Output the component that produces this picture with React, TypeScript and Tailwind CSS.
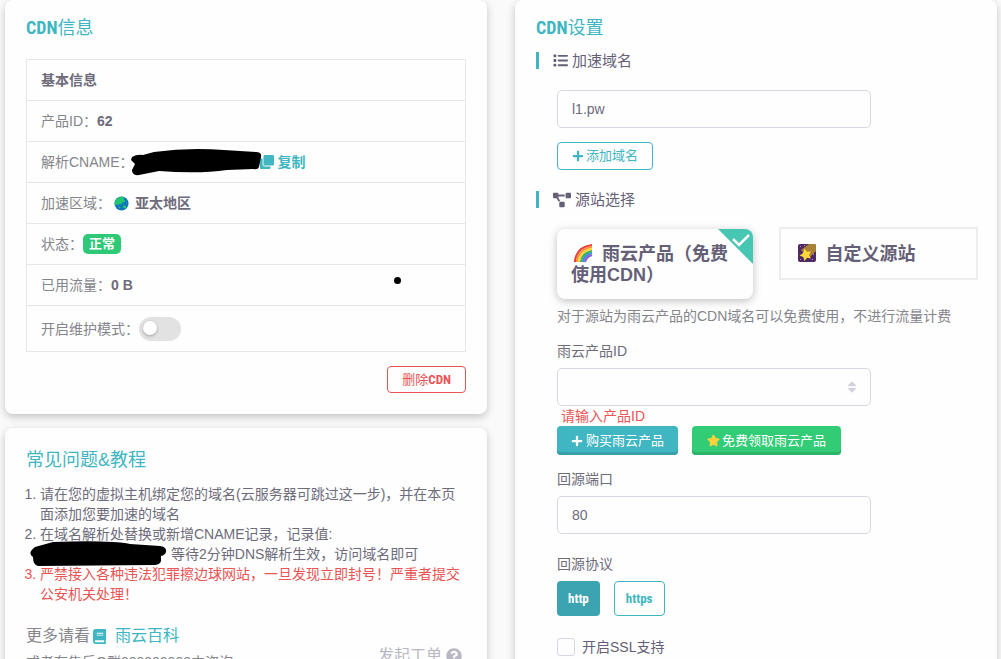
import type { ReactNode } from "react";
import { FaBook, FaClone, FaPlus, FaProjectDiagram, FaQuestionCircle, FaSort, FaStar } from "react-icons/fa";
import { FaList } from "react-icons/fa6";

const Globe = () => (
  <svg viewBox="0 0 16 16" className="size-[15px]" aria-hidden="true">
    <circle cx="8" cy="8" r="7.5" fill="#1277bd" />
    <path d="M2 4Q5 .2 9 .8L11 2 10 3.5 12 5 11 7 9 6.5 8 9 6.5 8 5 9.5 3 8.5 2 10 .7 8.5Q.5 6 2 4Z" fill="#20c86a" />
    <path d="M9.5 10.5 12 10 13.5 11.5 12 13.5 10 12.5ZM5 11 7 12 6 13.5Z" fill="#20c86a" />
  </svg>
);

const Rainbow = () => (
  <svg viewBox="0 0 20 20" className="ml-0.5 mr-1 inline size-5 align-[-3px]" fill="none" strokeWidth="2.2" aria-hidden="true">
    <path d="M2 19Q3 4 19 2" stroke="#e8403a" />
    <path d="M4 19Q5 6 19 4" stroke="#f8923a" />
    <path d="M6 19Q7 8 19 6" stroke="#fbd43c" />
    <path d="M8 19Q9 10 19 8" stroke="#3db54a" />
    <path d="M10 19Q11 12 19 10" stroke="#3a8ee0" />
    <path d="M12 19Q13 14 19 12" stroke="#8b5fd0" />
  </svg>
);

const Comet = () => (
  <svg viewBox="0 0 20 20" className="ml-0.5 mr-1 inline size-5 align-[-3px]" aria-hidden="true">
    <rect x="1" y="1" width="18" height="18" rx="2" fill="#4e2a63" />
    <path d="M4 7 12 1H17Q19 1 19 3V8L12 15Z" fill="#a98236" />
    <path d="M7.5 5.5 10 8.8 14 8.5 12 12 14 15.5 10 14.8 7.5 18 6.3 14 2.5 12.5 6 10.3Z" fill="#ffd83b" />
    <path d="M3 3H4V4H3ZM7 2H8V3H7ZM16 11H17V12H16ZM15 16H16V17H15ZM3 16H4V17H3Z" fill="#b48fd0" />
  </svg>
);

const Condensed = ({ children }: { children: ReactNode }) => (
  <span className="font-['Roboto_Condensed','Open_Sans_Condensed','Noto_Sans_Condensed','Liberation_Sans',sans-serif] leading-none font-bold">
    {children}
  </span>
);

const Card = ({ children, className }: { children: ReactNode; className: string }) => (
  <section className={`rounded-lg bg-[#fdfefd] shadow-[0_3px_8px_rgba(0,0,0,0.22)] ${className}`}>{children}</section>
);

const Title = ({ children }: { children: ReactNode }) => (
  <h2 className="text-lg leading-[22px] text-[#3fb6c1]">{children}</h2>
);

const SectionHead = ({ icon, children }: { icon: ReactNode; children: ReactNode }) => (
  <h3 className="flex h-[17px] items-center gap-1 border-l-[3px] border-[#3fb6c1] pl-3.5 text-[15px] text-[#655f77]">
    {icon}
    {children}
  </h3>
);

const Row = ({ label, children }: { label: string; children?: ReactNode }) => (
  <tr className="border border-[#e6e6ed]">
    <td className="h-[41px] px-3.5">
      <div className="relative flex items-center text-[#85858c]">
        {label}
        {children}
      </div>
    </td>
  </tr>
);

const inputStyle = "block h-[38px] w-full rounded-[5px] border border-[#d8d6e0] bg-transparent px-3.5 text-[#6e6b7b]";

const App = () => {
  return (
    <main className="grid h-screen grid-cols-2 items-start gap-7 overflow-hidden bg-[#fafafa] pl-[5px] pr-1 font-['Liberation_Sans','Noto_Sans_CJK_SC',sans-serif] text-sm leading-5 text-[#6e6b7b]">
      <div className="flex flex-col gap-3.5">
        <Card className="px-[21px] pt-[17px] pb-[21px]">
          <Title>
            <Condensed>CDN</Condensed>信息
          </Title>
          <table className="mt-5 w-full border-collapse">
            <thead>
              <tr className="border border-[#e6e6ed]">
                <th className="h-[41px] px-3.5 text-left">基本信息</th>
              </tr>
            </thead>
            <tbody>
              <Row label="产品ID：">
                <b className="text-[#6e6b7b]">62</b>
              </Row>
              <Row label="解析CNAME：">
                <svg viewBox="0 0 134 28" className="absolute left-[88px] h-7 w-[134px]" aria-hidden="true">
                  <path d="M3 9Q8 6 14 7L25 4Q60-1 95 2L127 4Q133 4 132 9L130 19Q129 22 124 21L98 22Q70 26 30 23L10 27Q3 28 3 22L6 16 2 12Z" fill="#000" />
                </svg>
                <button className="ml-[126px] flex items-center gap-1 font-bold text-[#3fb6c1]">
                  <FaClone className="size-3.5" />
                  复制
                </button>
              </Row>
              <Row label="加速区域：">
                <span className="ml-[3px]"><Globe /></span>
                <b className="ml-1.5 text-[#6e6b7b]">亚太地区</b>
              </Row>
              <Row label="状态：">
                <span className="rounded-[5px] bg-[#2dc976] px-1.5 text-[13px] font-bold text-white">正常</span>
              </Row>
              <Row label="已用流量：">
                <b className="text-[#6e6b7b]">0 B</b>
                <span className="absolute right-[50px] top-0.5 size-[7px] rounded-full bg-black" />
              </Row>
              <tr className="border border-[#e6e6ed]">
                <td className="h-[46px] px-3.5 text-[#85858c]">
                  <label className="flex items-center">
                    开启维护模式：
                    <input
                      type="checkbox"
                      className="h-6 w-[42px] appearance-none rounded-full bg-[#e2e2e2] p-1 before:block before:size-3.5 before:rounded-full before:bg-white before:shadow-[0_1px_3px_rgba(0,0,0,0.3)] checked:bg-[#3fb6c1]"
                    />
                  </label>
                </td>
              </tr>
            </tbody>
          </table>
          <div className="mt-3.5 flex justify-end">
            <button className="h-[27px] rounded border border-[#ea5455] px-3.5 text-[13px] text-[#ea5455]">
              删除<Condensed>CDN</Condensed>
            </button>
          </div>
        </Card>

        <Card className="px-[21px] pt-[21px] pb-[21px]">
          <Title>常见问题&amp;教程</Title>
          <ol className="mt-[13px] list-decimal pl-3.5">
            <li>请在您的虚拟主机绑定您的域名(云服务器可跳过这一步)，并在本页面添加您要加速的域名</li>
            <li>
              在域名解析处替换或新增CNAME记录，记录值:
              <div className="relative pl-[131px]">
                <svg viewBox="0 0 136 25" className="absolute -left-2.5 -top-[3px] h-[25px] w-[136px]" aria-hidden="true">
                  <path d="M5 6 23 1Q80-1 100 3L130 5Q137 6 136 11 135 14 131 15L131 20Q130 24 124 24L8 25Q3 24 3 16-3 12 5 6Z" fill="#000" />
                </svg>
                等待2分钟DNS解析生效，访问域名即可
              </div>
            </li>
            <li className="text-[#ea5455]">严禁接入各种违法犯罪擦边球网站，一旦发现立即封号！严重者提交公安机关处理！</li>
          </ol>
          <div className="mt-5 flex items-start justify-between text-[#85858c]">
            <div>
              <p className="flex items-center text-base">
                更多请看
                <a href="#wiki" className="ml-0.5 flex items-center gap-2 text-[#3fb6c1]">
                  <FaBook className="size-[15px]" />
                  雨云百科
                </a>
              </p>
              <p className="mt-1">或者在售后Q群000000000中咨询</p>
            </div>
            <button className="mt-5 mr-1 flex items-center gap-1 text-base text-[#b9b7c1]">
              发起工单
              <FaQuestionCircle />
            </button>
          </div>
        </Card>
      </div>

      <Card className="min-h-screen px-[21px] pt-[17px] pb-[21px]">
        <Title>
          <Condensed>CDN</Condensed>设置
        </Title>
        <div className="mt-[13px]">
          <SectionHead icon={<FaList className="size-[15px]" />}>加速域名</SectionHead>
        </div>
        <div className="mt-[21px] pl-[21px]">
          <div className="w-3/4">
            <input className={inputStyle} defaultValue="l1.pw" aria-label="加速域名" />
          </div>
          <button className="mt-3.5 flex h-7 items-center gap-0.5 rounded border border-[#3fb6c1] px-3.5 text-[13px] text-[#3fb6c1]">
            <FaPlus className="size-3" />
            添加域名
          </button>
        </div>
        <div className="mt-[21px]">
          <SectionHead icon={<FaProjectDiagram className="size-[18px]" />}>源站选择</SectionHead>
        </div>

        <div className="pl-[21px]">
          <div className="-mr-0.5 mt-[19px] flex items-start gap-[26px] text-lg leading-[21px] font-bold text-[#655f77]">
            <button className="relative mt-0.5 h-[70px] flex-1 overflow-hidden rounded-lg px-3.5 text-left shadow-[0_2px_8px_rgba(0,0,0,0.25)]">
              <Rainbow /> 雨云产品（免费使用CDN）
              <svg viewBox="0 0 35 35" className="absolute right-0 top-0 size-[35px]" fill="none" aria-hidden="true">
                <path d="M0 0H35V35Z" fill="#46c6b3" />
                <path d="M15 10 21 16 31 6" stroke="#fff" strokeWidth="2.5" />
              </svg>
            </button>
            <button className="h-[53px] flex-1 border-2 border-[#ededee] px-3.5 text-left">
              <Comet /> 自定义源站
            </button>
          </div>
          <p className="mt-[7px] text-[#85858c]">对于源站为雨云产品的CDN域名可以免费使用，不进行流量计费</p>

          <label htmlFor="product" className="mt-[15px] block">雨云产品ID</label>
          <div className="relative mt-[7px] w-3/4">
            <select id="product" className={`${inputStyle} appearance-none`} />
            <FaSort className="pointer-events-none absolute right-3 top-3 text-[#d3d1dc]" />
          </div>
          <p className="px-1 text-[#ea5455]">请输入产品ID</p>
          <div className="flex gap-3.5 text-[13px] text-white">
            <button className="flex h-[29px] items-center gap-[3px] rounded bg-[#3fb6c1] px-3.5 shadow-[inset_0_-3px_0_#399fa9]">
              <FaPlus className="size-3" />
              购买雨云产品
            </button>
            <button className="flex h-[29px] items-center gap-0.5 rounded bg-[#32cb76] px-[15px] shadow-[inset_0_-3px_0_#2db269]">
              <FaStar className="size-[13px] text-[#ffd23c]" />
              免费领取雨云产品
            </button>
          </div>

          <label htmlFor="port" className="mt-3.5 block">回源端口</label>
          <div className="mt-[7px] w-3/4">
            <input id="port" className={inputStyle} defaultValue="80" />
          </div>

          <p className="mt-5">回源协议</p>
          <div className="mt-[7px] flex gap-3.5 text-[13px]">
            <button className="h-[35px] rounded bg-[#3ba4b0] px-[11px] text-white"><Condensed>http</Condensed></button>
            <button className="h-[35px] rounded border border-[#3fb6c1] px-[11px] text-[#3fb6c1]"><Condensed>https</Condensed></button>
          </div>
          <label className="mt-[21px] flex items-center gap-[7px] text-[#655f77]">
            <input type="checkbox" className="size-[18px] appearance-none rounded-[3px] border border-[#d8d6e0] checked:bg-[#3fb6c1]" />
            开启SSL支持
          </label>
        </div>
      </Card>
    </main>
  );
};

export default App;
